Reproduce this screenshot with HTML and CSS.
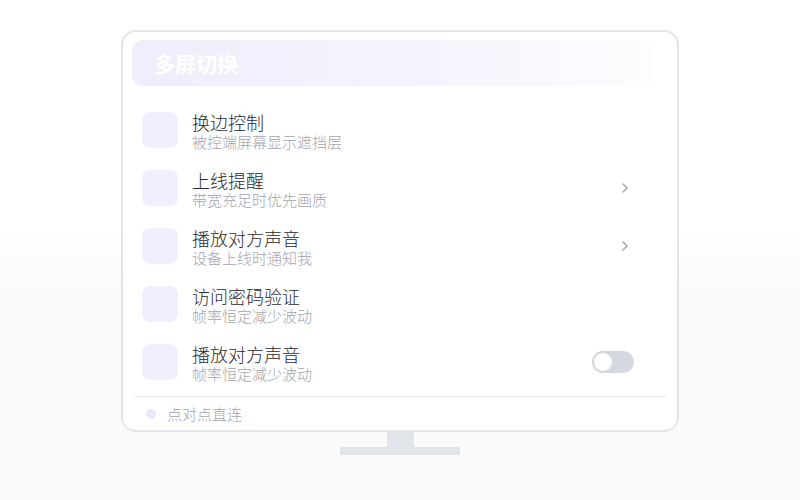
FILE: index.html
```html
<!DOCTYPE html>
<html lang="zh-CN">
<head>
    <meta charset="UTF-8">
    <title>多屏切换</title>
    <link rel="stylesheet" href="styles.css">
</head>
<body>
    <div class="screen">
        <div class="monitor">
            <div class="monitor-header">
                <h2>多屏切换</h2>
            </div>
            <ul class="setting-list">
                <li class="setting-row">
                    <span class="setting-icon"></span>
                    <div class="setting-text">
                        <p class="setting-title">换边控制</p>
                        <p class="setting-desc">被控端屏幕显示遮挡层</p>
                    </div>
                </li>
                <li class="setting-row">
                    <span class="setting-icon"></span>
                    <div class="setting-text">
                        <p class="setting-title">上线提醒</p>
                        <p class="setting-desc">带宽充足时优先画质</p>
                    </div>
                    <svg class="chevron" width="8" height="12" viewBox="0 0 8 12">
                        <polyline points="2,2 6,6 2,10" fill="none" stroke="#9ca1ad" stroke-width="1.4" stroke-linecap="round" stroke-linejoin="round"/>
                    </svg>
                </li>
                <li class="setting-row">
                    <span class="setting-icon"></span>
                    <div class="setting-text">
                        <p class="setting-title">播放对方声音</p>
                        <p class="setting-desc">设备上线时通知我</p>
                    </div>
                    <svg class="chevron" width="8" height="12" viewBox="0 0 8 12">
                        <polyline points="2,2 6,6 2,10" fill="none" stroke="#9ca1ad" stroke-width="1.4" stroke-linecap="round" stroke-linejoin="round"/>
                    </svg>
                </li>
                <li class="setting-row">
                    <span class="setting-icon"></span>
                    <div class="setting-text">
                        <p class="setting-title">访问密码验证</p>
                        <p class="setting-desc">帧率恒定减少波动</p>
                    </div>
                </li>
                <li class="setting-row">
                    <span class="setting-icon"></span>
                    <div class="setting-text">
                        <p class="setting-title">播放对方声音</p>
                        <p class="setting-desc">帧率恒定减少波动</p>
                    </div>
                    <span class="toggle"><span class="toggle-knob"></span></span>
                </li>
            </ul>
            <div class="monitor-footer">
                <span class="footer-dot"></span>
                <span>点对点直连</span>
            </div>
        </div>
        <div class="stand-neck"></div>
        <div class="stand-base"></div>
    </div>
</body>
</html>
```

FILE: styles.css
```css
body {
    margin: 0;
    height: 500px;
    font-family: "Noto Sans CJK SC", "Noto Sans", sans-serif;
    background: linear-gradient(to bottom, #ffffff 45%, #fafafb 58%);
    color: #333;
}

.screen {
    display: flex;
    flex-direction: column;
    align-items: center;
    padding-top: 30px;
}

.monitor {
    width: 558px;
    height: 402px;
    box-sizing: border-box;
    border: 2px solid #e3e5ea;
    border-radius: 15px;
    background-color: #fff;
    padding: 8px 9px 0 9px;
    display: flex;
    flex-direction: column;
}

.monitor-header {
    height: 46px;
    margin-right: 16px;
    border-radius: 10px;
    background: linear-gradient(to right, #f0edfc, #f5f3fd 55%, #fdfdff);
    display: flex;
    align-items: center;
    padding-left: 22px;
}

.monitor-header h2 {
    margin: 0;
    font-size: 21px;
    font-weight: 700;
    color: #fff;
}

.setting-list {
    list-style: none;
    margin: 15px 0 0 0;
    padding: 0;
}

.setting-row {
    height: 58px;
    display: flex;
    align-items: center;
    padding: 0 34px 0 10px;
}

.setting-icon {
    width: 36px;
    height: 36px;
    border-radius: 8px;
    background-color: #f1effd;
    flex-shrink: 0;
}

.setting-text {
    flex: 1;
    margin-left: 14px;
    padding-top: 3px;
}

.setting-text p {
    margin: 0;
}

.setting-title {
    font-size: 18px;
    line-height: 20px;
    font-weight: 300;
    color: #2b2b30;
}

.setting-desc {
    font-size: 15px;
    line-height: 20px;
    font-weight: 300;
    color: #a3a5ad;
}

.chevron {
    margin-right: 5px;
}

.toggle {
    width: 42px;
    height: 22px;
    border-radius: 11px;
    background-color: #d5d8de;
    display: flex;
    align-items: center;
    padding: 0 2px;
    box-sizing: border-box;
}

.toggle-knob {
    width: 18px;
    height: 18px;
    border-radius: 50%;
    background-color: #fff;
}

.monitor-footer {
    margin: 5px 1px 0 2px;
    border-top: 1px solid #eceef1;
    flex: 1;
    display: flex;
    align-items: center;
    padding-left: 12px;
    font-size: 15px;
    font-weight: 300;
    color: #a3a5ad;
}

.footer-dot {
    width: 10px;
    height: 10px;
    border-radius: 50%;
    background-color: #ebe8fa;
    margin-right: 11px;
}

.stand-neck {
    width: 27px;
    height: 15px;
    background-color: #e1e4e9;
}

.stand-base {
    width: 120px;
    height: 8px;
    background-color: #e1e4e9;
}
```
